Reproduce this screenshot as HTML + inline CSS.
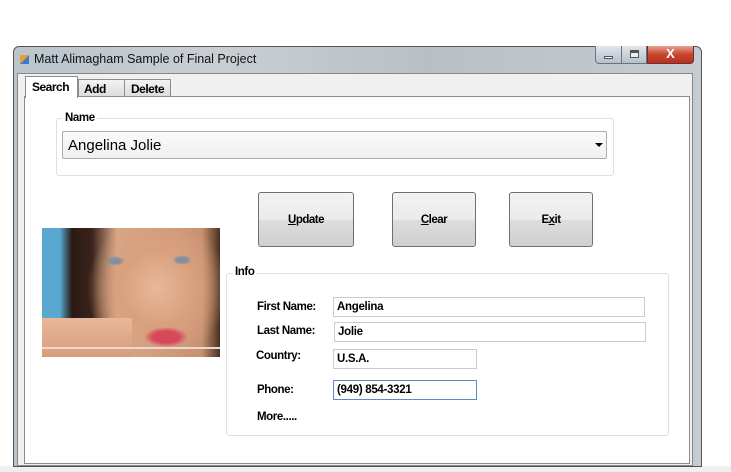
<!DOCTYPE html>
<html><head><style>
*{box-sizing:border-box;margin:0;padding:0}
body{width:731px;height:472px;background:#fff;position:relative;overflow:hidden;font-family:"Liberation Sans",sans-serif;font-size:12px;color:#000}
.a{position:absolute}
.lbl{position:absolute;font-weight:bold;font-size:11.5px;letter-spacing:-0.4px}
.tb{position:absolute;border:1px solid #c8ccd2;background:#fff;font-weight:bold;font-size:11.5px;padding:3px 0 0 3px;letter-spacing:-0.3px}
.btn{position:absolute;border:1px solid #707070;border-radius:3px;background:linear-gradient(#f2f2f2 0,#ebebeb 50%,#dddddd 51%,#cfcfcf 100%);font-weight:bold;font-size:11.5px;text-align:center;line-height:54px;letter-spacing:-0.5px}
</style></head><body>
<div class="a" style="left:0;top:466px;width:731px;height:6px;background:#efefef"></div>
<div class="a" style="left:13px;top:46px;width:689px;height:421px;background:linear-gradient(90deg,#b9c4cc,#c9ced3 30%,#b8c0c6 60%,#c4cbd1);border:1px solid #555;border-radius:6px 6px 0 0"></div>
<div class="a" style="left:20px;top:52px;font-size:12.5px;color:#111"><span style="display:inline-block;width:9px;height:9px;background:linear-gradient(135deg,#e8a030 50%,#3a7ad0 50%);margin-right:5px;vertical-align:-1px"></span>Matt Alimagham Sample of Final Project</div>
<div class="a" style="left:595px;top:46px;width:27px;height:18px;border:1px solid #6a7480;border-top:none;border-radius:0 0 0 4px;background:linear-gradient(#dfe5ea,#b6c0c9)"><div class="a" style="left:8px;top:10px;width:9px;height:3px;background:#fff;border:1px solid #555"></div></div>
<div class="a" style="left:621px;top:46px;width:26px;height:18px;border:1px solid #6a7480;border-top:none;background:linear-gradient(#dfe5ea,#b6c0c9)"><div class="a" style="left:8px;top:4px;width:9px;height:8px;border:1px solid #555;border-top-width:3px;background:#eee"></div></div>
<div class="a" style="left:647px;top:46px;width:47px;height:18px;border:1px solid #6a3030;border-top:none;border-radius:0 0 4px 0;background:linear-gradient(#e8a090,#c84530 50%,#b83020);color:#fff;font-weight:bold;text-align:center;font-size:13px;line-height:16px">X</div>
<div class="a" style="left:17px;top:73px;width:676px;height:393px;background:#f0f0f0;border:1px solid #888"></div>
<div class="a" style="left:24px;top:96px;width:666px;height:368px;background:#fff;border:1px solid #8c8c8c"></div>
<div class="a" style="left:78px;top:79px;width:47px;height:18px;border:1px solid #8c8c8c;background:linear-gradient(#f3f3f3,#dcdcdc);font-weight:bold;padding:2px 0 0 5px;letter-spacing:-0.5px">Add</div>
<div class="a" style="left:124px;top:79px;width:47px;height:18px;border:1px solid #8c8c8c;background:linear-gradient(#f3f3f3,#dcdcdc);font-weight:bold;padding:2px 0 0 6px;letter-spacing:-0.5px">Delete</div>
<div class="a" style="left:25px;top:76px;width:53px;height:22px;border:1px solid #8c8c8c;border-bottom:none;background:#fff;font-weight:bold;padding:3px 0 0 6px;letter-spacing:-0.5px">Search</div>
<div class="a" style="left:56px;top:118px;width:558px;height:58px;border:1px solid #dcdfe3;border-radius:3px"></div>
<div class="lbl" style="left:63px;top:112px;background:#fff;padding:0 2px">Name</div>
<div class="a" style="left:62px;top:131px;width:545px;height:28px;border:1px solid #acacac;border-radius:2px;background:linear-gradient(#fafafa,#f0f0f0);font-size:15px;padding:5px 0 0 5px">Angelina Jolie</div>
<div class="a" style="left:595px;top:143px;width:0;height:0;border-left:4px solid transparent;border-right:4px solid transparent;border-top:4px solid #000"></div>
<div class="btn" style="left:258px;top:192px;width:96px;height:55px"><u>U</u>pdate</div>
<div class="btn" style="left:392px;top:192px;width:84px;height:55px"><u>C</u>lear</div>
<div class="btn" style="left:509px;top:192px;width:84px;height:55px">E<u>x</u>it</div>
<div class="a" style="left:42px;top:228px;width:178px;height:129px;background:
radial-gradient(ellipse 22px 10px at 124px 109px,#d8485a 60%,transparent 100%),
radial-gradient(ellipse 10px 5px at 73px 33px,#8090a0 50%,transparent),
radial-gradient(ellipse 10px 5px at 140px 32px,#8090a0 50%,transparent),
radial-gradient(ellipse 70px 75px at 115px 60px,#e8b89a 0,#d9a07e 50%,transparent 100%),
linear-gradient(90deg,#58a8d0 0,#58a8d0 18px,#2a1a14 30px,#3a241c 50px,#d8a888 75px,#c89070 160px,#4a3020 178px)"></div>
<div class="a" style="left:42px;top:318px;width:90px;height:39px;background:linear-gradient(#e8b898,#d89c7c)"></div>
<div class="a" style="left:42px;top:347px;width:178px;height:2px;background:#e8d8d8"></div>
<div class="a" style="left:226px;top:273px;width:443px;height:163px;border:1px solid #dcdfe3;border-radius:3px"></div>
<div class="lbl" style="left:233px;top:266px;background:#fff;padding:0 2px">Info</div>
<div class="lbl" style="left:257px;top:301px">First Name:</div>
<div class="lbl" style="left:257px;top:325px">Last Name:</div>
<div class="lbl" style="left:256px;top:350px">Country:</div>
<div class="lbl" style="left:257px;top:384px">Phone:</div>
<div class="lbl" style="left:257px;top:411px">More.....</div>
<div class="tb" style="left:333px;top:297px;width:312px;height:20px">Angelina</div>
<div class="tb" style="left:334px;top:322px;width:312px;height:20px">Jolie</div>
<div class="tb" style="left:333px;top:349px;width:144px;height:20px">U.S.A.</div>
<div class="tb" style="left:333px;top:380px;width:144px;height:20px;border-color:#5a8ccc">(949) 854-3321</div>
</body></html>
